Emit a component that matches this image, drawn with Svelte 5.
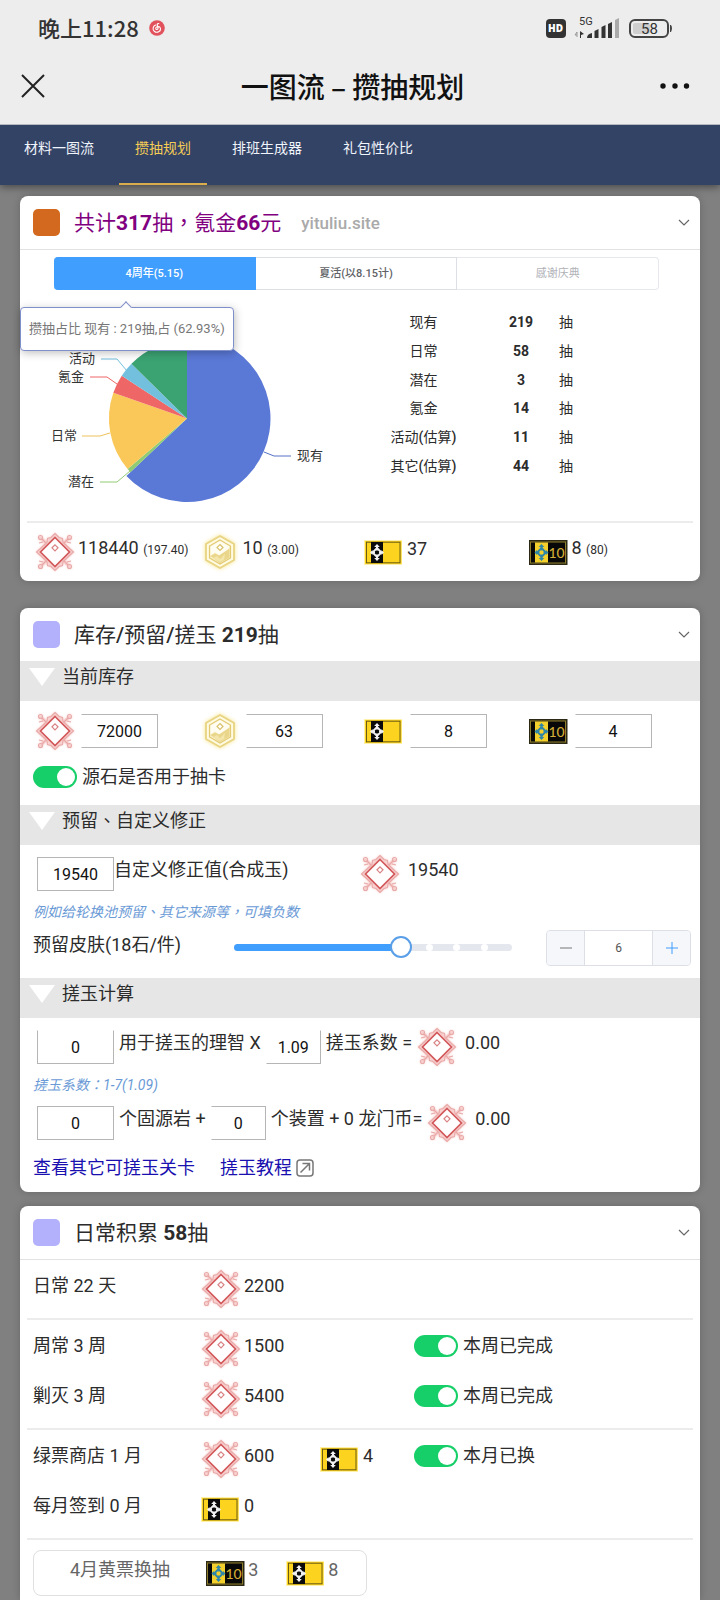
<script>
  const tabs = ['材料一图流', '攒抽规划', '排班生成器', '礼包性价比'];
  const stats = [
    ['现有', '', 219],
    ['日常', '', 58],
    ['潜在', '', 3],
    ['氪金', '', 14],
    ['活动', '估算', 11],
    ['其它', '估算', 44]
  ];

  const cx = 167;
  const cy = 128.5;
  const slices = [
    { value: 62.93, color: '#5a78d6', r: 83.5 },
    { value: 0.85, color: '#8fcb74', r: 78 },
    { value: 16.55, color: '#fac858', r: 78 },
    { value: 3.9, color: '#ee6666', r: 78 },
    { value: 3.15, color: '#73c0de', r: 78 },
    { value: 12.62, color: '#3ba272', r: 78 }
  ];
  let turned = 0;
  const wedges = slices.map((s) => {
    const a = (turned / 100) * 2 * Math.PI;
    turned += s.value;
    const b = (turned / 100) * 2 * Math.PI;
    const p = (t) => `${(cx + s.r * Math.sin(t)).toFixed(2)} ${(cy - s.r * Math.cos(t)).toFixed(2)}`;
    return { color: s.color, d: `M${cx} ${cy}L${p(a)}A${s.r} ${s.r} 0 ${b - a > Math.PI ? 1 : 0} 1 ${p(b)}Z` };
  });
  const callouts = [
    { name: '活动', x: 49, y: 73, color: '#73c0de', line: '81,69 97,69 107,81' },
    { name: '氪金', x: 38, y: 91, color: '#ee6666', line: '70,87 87,87 97,94' },
    { name: '日常', x: 31, y: 150, color: '#eec25c', line: '62,146 80,146 90,143' },
    { name: '潜在', x: 48, y: 196, color: '#91cc75', line: '80,192 97,192 110,181' },
    { name: '现有', x: 277, y: 170, color: '#5470c6', line: '244,162 254,166 271,166' }
  ];
  let skins = $state(6);
</script>

{#snippet jade()}
  <svg class="ico red" viewBox="0 0 40 40" aria-hidden="true">
    <g fill="#fbdedd" stroke="#f8d0cf" stroke-width="3" stroke-linejoin="round">
      <path d="M20 3 37 20 20 37 3 20Z" /><path d="M5 5l7 7M35 5l-7 7M5 35l7-7M35 35l-7-7" />
    </g>
    <g fill="none" stroke="#e8aaa8" stroke-width="1.1">
      <path d="M20 1.500l4 4 3.500 1 .5 4 7 6.500 3.500 3-3.500 3-7 6.500-.5 4-3.500 1-4 4-4-4-3.500-1-.5-4-7-6.500L1.500 20 5 17l7-6.500.5-4 3.500-1z" />
      <circle cx="5.500" cy="5.500" r="2" /><circle cx="34.500" cy="5.500" r="2" />
      <circle cx="5.500" cy="34.500" r="2" /><circle cx="34.500" cy="34.500" r="2" />
      <path d="M7 7l4 4M33 7l-4 4M7 33l4-4M33 33l-4-4M4 11l4-1M36 11l-4-1M4 29l4 1M36 29l-4 1" />
    </g>
    <path d="M20 5.500 34.500 20 20 34.500 5.500 20Z" fill="#fffdfd" stroke="#d2585b" stroke-width="1.700" />
    <path d="M20 12.800 23 15.800 20 18.800 17 15.800Z" fill="#fff" stroke="#d98183" stroke-width="1.200" />
  </svg>
{/snippet}

{#snippet prime()}
  <svg class="ico gold" viewBox="0 0 40 40" aria-hidden="true">
    <path d="M20 4 34 12V28L20 36 6 28V12Z" fill="#fffbe2" stroke="#e8d484" stroke-width="1.800" />
    <path d="M20 8 30.500 14V26L20 32 9.500 26V14Z" fill="#f8efc4" stroke="#e2ca74" stroke-width="1.200" />
    <path d="M10.500 14.500 20 9l9.500 5.500-3 7-6.500 2-5-3-4.500 3z" fill="#fffdf2" />
    <path d="M10.500 24l4.500-2.500 4 2 6-4 4.500-3v9l-9.500 5.500z" fill="#ead68a" />
    <path d="M13 26l4-2 3 3 5-5-1 6-4 2z" fill="#f4e5ab" />
    <path d="M20 12.500 23 15.500 20 18.500 17 15.500Z" fill="#fff" stroke="#d8c36c" stroke-width="1.200" />
  </svg>
{/snippet}

{#snippet emblem(color)}
  <g transform="translate(12 11.500)">
    <path d="M0-4.500 4.500 0 0 4.500-4.500 0Z" fill="none" stroke={color} stroke-width="1.800" />
    <path d="M0-8.500 2.800-5.500H1V-2H-1V-5.500H-2.800ZM0 8.500 2.800 5.500H1V2H-1V5.500H-2.800ZM-7 0-4.500-2.500V-1H-2V1H-4.500V2.500ZM7 0 4.500-2.500V-1H2V1H4.500V2.500Z" fill={color} />
  </g>
{/snippet}

{#snippet ticket()}
  <svg class="ico" viewBox="-1 -9 40 40" aria-hidden="true">
    <rect x="-1" y="-1" width="38" height="25" fill="#fff2a8" />
    <rect width="36.500" height="23" fill="#fcd31e" />
    <rect x="1.500" y="1.200" width="33.500" height="20.600" fill="none" stroke="#6d5c14" />
    <rect x="6" y="1" width="12" height="21" fill="#0b0b0b" />
    {@render emblem('#f2f2f2')}
  </svg>
{/snippet}

{#snippet ticketTen()}
  <svg class="ico" viewBox="0 -9 40 40" aria-hidden="true">
    <rect x="-.5" y="-1" width="39" height="25" fill="#2b2815" />
    <rect x="1.500" y="1" width="35" height="21" fill="#080808" stroke="#8d7c2a" />
    <rect x="6" y="1.500" width="13" height="20" fill="#f4d02c" />
    <g transform="translate(.5 0)">{@render emblem('#2e86a8')}</g>
    <text x="19.500" y="17" font-size="14" font-weight="500" fill="#d3ac35" font-family="Lato, sans-serif">10</text>
  </svg>
{/snippet}

{#snippet chevron()}
  <svg class="chev" viewBox="0 0 12 8" aria-hidden="true"><path d="M1 1l5 5 5-5" fill="none" stroke="#666" stroke-width="1.200" /></svg>
{/snippet}

<div class="phone">
  <div class="status">
    <span class="clock">晚上11:28</span>
    <svg class="music" viewBox="0 0 16 16" aria-hidden="true">
      <circle cx="8" cy="8" r="7.800" fill="#e2525c" />
      <path d="M9.800 3.600C8.400 3.200 8 4 8.200 5l.8 3.300c.2 1.600-2.300 1.700-2.300 0 0-1.900 4.200-2.700 4.800.2.500 3-3.400 4.800-6 3C3 9.700 4 6 6.600 5" fill="none" stroke="#fff" stroke-width="1.100" stroke-linecap="round" />
    </svg>
    <svg class="signals" viewBox="0 -1 128 26" aria-hidden="true">
      <rect x="0" y="3" width="20" height="19" rx="4" fill="#333" />
      <text x="2" y="16" font-size="10" font-weight="800" fill="#fff" font-family="Open Sans">HD</text>
      <text x="33" y="9" font-size="11" fill="#333" font-family="Roboto">5G</text>
      <path d="M31 21v-5l-2 3h2" stroke="#999" fill="none" /><path d="M34 22v-7l4 3-3 1v3z" fill="#333" />
      <path d="M41 22q0-4 5-5v5zM48.500 22v-7l4-2v9zM55.500 22V11l4-2v13zM62 22V8l4-2v16z" fill="#333" />
      <path d="M69 22V4l4-2v20z" fill="#aaa" />
      <rect x="84" y="4" width="38" height="17" rx="5" fill="none" stroke="#444" stroke-width="2" />
      <rect x="87" y="7" width="17" height="11" rx="2" fill="#cfcfcf" />
      <text x="95" y="18" font-size="15" fill="#333" font-family="Roboto">58</text>
      <path d="M124 9h1q2 3 0 7h-1z" fill="#444" />
    </svg>
  </div>
  <header class="titlebar">
    <button class="bare" aria-label="关闭"><svg width="24" height="24" viewBox="0 0 24 24"><path d="M1 1l22 22M23 1 1 23" stroke="#222" stroke-width="2" /></svg></button>
    <h1>一图流 – 攒抽规划</h1>
    <button class="bare" aria-label="更多"><svg width="30" height="24" viewBox="0 0 30 24" fill="#111"><circle cx="3" cy="12" r="2.700" /><circle cx="15" cy="12" r="2.700" /><circle cx="26.500" cy="12" r="2.700" /></svg></button>
  </header>
  <nav>
    {#each tabs as tab, i}
      <a href="#{i}" class:active={i === 1}>{tab}</a>
    {/each}
  </nav>

  <main>
    <section class="card first">
      <div class="head line">
        <i class="mark orange"></i>
        <h2 class="purple">共计<b>317</b>抽，氪金<b>66</b>元</h2>
        <span class="site">yituliu.site</span>
        {@render chevron()}
      </div>
      <div class="seg">
        <button class="on">4周年(5.15)</button>
        <button>夏活(以8.15计)</button>
        <button class="off">感谢庆典</button>
      </div>
      <div class="overview">
        <div class="chart">
          <svg width="333" height="231" viewBox="0 0 333 231" role="img">
            {#each wedges as w}<path d={w.d} fill={w.color} />{/each}
            {#each callouts as c}
              <polyline points={c.line} fill="none" stroke={c.color} />
              <text x={c.x} y={c.y} font-size="13" fill="#333">{c.name}</text>
            {/each}
          </svg>
          <div class="tip">攒抽占比 现有 : 219抽,占 (62.93%)</div>
        </div>
        <table>
          <tbody>
            {#each stats as [name, note, n]}
              <tr><td class="name">{name}{#if note}<b>(</b>{note}<b>)</b>{/if}</td><td class="num">{n}</td><td class="unit">抽</td></tr>
            {/each}
          </tbody>
        </table>
      </div>
      <hr />
      <div class="quads">
        <div>{@render jade()}<span class="t">118440 <small>(197.40)</small></span></div>
        <div>{@render prime()}<span class="t">10 <small>(3.00)</small></span></div>
        <div>{@render ticket()}<span class="t">37</span></div>
        <div>{@render ticketTen()}<span class="t">8 <small>(80)</small></span></div>
      </div>
    </section>

    <section class="card">
      <div class="head">
        <i class="mark"></i>
        <h2>库存<em>/</em>预留<em>/</em>搓玉 <b>219</b>抽</h2>
        {@render chevron()}
      </div>
      <h3>当前库存</h3>
      <div class="quads stock">
        <div>{@render jade()}<input class="box open" aria-label="合成玉" value="72000" /></div>
        <div>{@render prime()}<input class="box open" aria-label="源石" value="63" /></div>
        <div>{@render ticket()}<input class="box open" aria-label="单抽券" value="8" /></div>
        <div>{@render ticketTen()}<input class="box open" aria-label="十连券" value="4" /></div>
      </div>
      <label class="check solo"><input type="checkbox" checked /><span>源石是否用于抽卡</span></label>
      <h3 class="gap">预留、自定义修正</h3>
      <div class="fields">
        <div class="half"><input class="box" id="fix" value="19540" /><label class="t" for="fix">自定义修正值(合成玉)</label></div>
        {@render jade()}<span class="t">19540</span>
      </div>
      <p class="hint">例如给轮换池预留、其它来源等，可填负数</p>
      <div class="skins">
        <label class="t" for="skin">预留皮肤(18石/件)</label>
        <div class="slider">
          <div class="rail">
            <div class="done" style="width:{skins * 10}%"></div>
            {#each [7, 8, 9] as s}<i style="left:{s * 10}%"></i>{/each}
          </div>
          <input id="skin" type="range" min="0" max="10" bind:value={skins} />
        </div>
        <div class="stepper">
          <button aria-label="减少" onclick={() => (skins = Math.max(0, skins - 1))}><svg width="12" height="12" viewBox="0 0 12 12"><path d="M0 6h12" stroke="#777" /></svg></button>
          <input aria-label="预留皮肤数量" bind:value={skins} />
          <button aria-label="增加" onclick={() => (skins = Math.min(10, skins + 1))}><svg width="12" height="12" viewBox="0 0 12 12"><path d="M0 6h12M6 0v12" stroke="#409eff" /></svg></button>
        </div>
      </div>
      <h3>搓玉计算</h3>
      <div class="fields">
        <input class="box flat" id="ap" value="0" /><label class="t" for="ap">用于搓玉的理智 X</label>
        <input class="box small flat open" id="rate" value="1.09" /><label class="t" for="rate">搓玉系数 =</label>
        {@render jade()}<span class="t">0.00</span>
      </div>
      <p class="hint">搓玉系数：1-7(1.09)</p>
      <div class="fields">
        <input class="box" id="rock" value="0" /><label class="t" for="rock">个固源岩 +</label>
        <input class="box small open" id="device" value="0" /><label class="t" for="device">个装置 + 0 龙门币=</label>
        {@render jade()}<span class="t">0.00</span>
      </div>
      <div class="links">
        <a href="#stages">查看其它可搓玉关卡</a>
        <a href="#guide">搓玉教程<svg width="18" height="18" viewBox="0 0 18 18"><rect x="1" y="1" width="16" height="16" rx="3" fill="none" stroke="#777" stroke-width="1.500" /><path d="M4.500 13.500 13 5M6.500 4.500H13.500V11.500" fill="none" stroke="#777" stroke-width="1.500" /></svg></a>
      </div>
    </section>

    <section class="card last">
      <div class="head line">
        <i class="mark"></i>
        <h2>日常积累 <b>58</b>抽</h2>
        {@render chevron()}
      </div>
      <div class="group">
        <div class="daily"><span class="t">日常 22 天</span><div>{@render jade()}<span class="t">2200</span></div></div>
      </div>
      <hr />
      <div class="group">
        <div class="daily"><span class="t">周常 3 周</span><div>{@render jade()}<span class="t">1500</span></div><div></div><label class="check t"><input type="checkbox" checked /><span>本周已完成</span></label></div>
        <div class="daily"><span class="t">剿灭 3 周</span><div>{@render jade()}<span class="t">5400</span></div><div></div><label class="check t"><input type="checkbox" checked /><span>本周已完成</span></label></div>
      </div>
      <hr />
      <div class="group">
        <div class="daily"><span class="t">绿票商店 1 月</span><div>{@render jade()}<span class="t">600</span></div><div>{@render ticket()}<span class="t">4</span></div><label class="check t"><input type="checkbox" checked /><span>本月已换</span></label></div>
        <div class="daily"><span class="t">每月签到 0 月</span><div>{@render ticket()}<span class="t">0</span></div></div>
      </div>
      <hr />
      <button class="exchange">
        <span class="t label">4月黄票换抽</span>
        <span class="pair">{@render ticketTen()}<span class="t">3</span></span>
        <span class="pair">{@render ticket()}<span class="t">8</span></span>
      </button>
    </section>
  </main>
</div>

<style>
  :global(body) { margin: 0; background: #808080; }
  * { box-sizing: border-box; }
  .phone { font-family: Roboto, "Noto Sans CJK TC", "Noto Sans CJK SC", sans-serif; font-size: 18px; line-height: 24px; color: #2c2c2c; overflow: hidden; }
  button, input { font: inherit; color: inherit; margin: 0; padding: 0; }
  svg { display: block; flex: none; }

  .status { display: flex; align-items: center; height: 56px; padding: 0 46px 0 38px; background: #ededed; color: #333; }
  .clock { padding-bottom: 2px; font-family: "Noto Sans CJK SC", sans-serif; font-size: 22px; font-weight: 500; }
  .music { width: 16px; height: 16px; margin-left: 10px; }
  .signals { width: 128px; height: 26px; margin-left: auto; }
  .titlebar { display: flex; align-items: center; justify-content: space-between; height: 69px; padding: 0 30px 9px 21px; background: #ededed; border-bottom: 1px solid #b4b8c0; color: #111; }
  .bare { border: 0; background: none; }
  h1 { margin: 0; font: 500 28px/36px "Noto Sans CJK SC", sans-serif; }
  nav { position: relative; display: flex; gap: 9px; height: 60px; padding: 0 8px; background: #334366; box-shadow: 0 2px 8px rgba(0, 0, 0, .45); clip-path: inset(0 0 -12px 0); font-family: "Noto Sans CJK SC", sans-serif; font-size: 14px; }
  nav a { padding: 10px 16px 0; color: #f0f4fb; text-decoration: none; border-bottom: 2px solid transparent; }
  nav .active { color: #f5cd55; border-color: #d9ad4c; }

  main { display: flex; flex-direction: column; gap: 14px; padding: 11px 20px 0; }
  .card { background: #fff; border-radius: 8px; box-shadow: 0 0 8px rgba(0, 0, 0, .2); }
  .first { margin-bottom: 13px; }
  .last { padding-bottom: 4px; border-radius: 8px 8px 0 0; }
  .head { display: flex; align-items: center; height: 53px; padding: 0 10px 0 13px; }
  .line { height: 54px; border-bottom: 1px solid #e2e2e2; }
  .mark { width: 27px; height: 27px; margin-right: 14px; border-radius: 5px; background: #b3b1fb; }
  .orange { background: #d2691e; }
  h2 { margin: 0; font-size: 21px; font-weight: 400; line-height: 28px; }
  h2 em { font-style: normal; font-weight: 500; }
  .purple { color: #800080; }
  .site { margin-left: 20px; font-size: 17px; font-weight: 500; color: #aaa; }
  .chev { width: 12px; height: 8px; margin-left: auto; }

  .seg { display: flex; margin: 7px 41px 0 34px; }
  .seg button { flex: 1; height: 33px; border: 1px solid #dcdfe6; border-left-width: 0; background: #fff; font-size: 11px; font-weight: 500; color: #606266; }
  .seg .on { background: #409eff; border-color: #409eff; color: #fff; border-radius: 4px 0 0 4px; }
  .seg .off { color: #b0b2b8; font-weight: 400; border-radius: 0 4px 4px 0; border-color: #e6e8ee; }
  .overview { display: flex; }
  .chart { position: relative; width: 333px; }
  .tip { position: absolute; left: 0; top: 17px; padding: 9px 8px; border: 1px solid #7f8fc9; border-radius: 4px; background: #fff; box-shadow: 1px 2px 8px rgba(0, 0, 0, .25); font-size: 13px; color: #777; white-space: nowrap; }
  .tip::before { content: ""; position: absolute; left: 101px; top: -5px; width: 7px; height: 7px; background: #fff; border: solid #7f8fc9; border-width: 1px 0 0 1px; transform: rotate(45deg); }
  table { height: 172px; margin-top: 18px; border-collapse: collapse; font-size: 14px; line-height: 20px; text-align: center; }
  td { padding: 0; }
  td b { font-weight: 500; }
  .name { width: 141px; }
  .num { width: 54px; font-weight: 700; }
  .unit { width: 36px; }
  hr { height: 2px; margin: 0 7px; border: 0; background: #ececec; }

  .ico { width: 40px; height: 40px; }
  .gold { filter: drop-shadow(0 0 2px #f6e588); }
  .red { filter: drop-shadow(0 0 1px #f9cfce); }
  .t { padding-bottom: 6px; white-space: nowrap; }
  small { font-size: 12px; }
  .quads { display: grid; grid-template-columns: repeat(4, 1fr); align-items: center; height: 58px; padding: 0 7px 0 15px; }
  .quads > div { display: flex; align-items: center; gap: 3px; }
  .stock { height: 60px; }
  .stock > div { gap: 6px; }
  .box { width: 77px; height: 34px; border: 1px solid #b5b5b5; border-radius: 0; background: #fff; font-size: 16px; text-align: center; color: #111; outline: 0; }
  .small { width: 55px; }
  .open { border-left-color: transparent; }
  .flat { border-top-color: transparent; }
  h3 { display: flex; gap: 7px; height: 40px; margin: 0; padding: 3px 9px; background: #e6e6e6; font-size: 18px; font-weight: 400; line-height: 26px; }
  h3::before { content: ""; width: 26px; height: 18px; margin-top: 4px; background: #fff; clip-path: polygon(0 0, 100% 0, 50% 100%); }
  .gap { margin-top: 10px; }
  .check { display: flex; align-items: center; gap: 5px; }
  .check input { appearance: none; display: flex; align-items: center; justify-content: flex-end; width: 44px; height: 22px; padding-right: 2px; border-radius: 11px; background: #17cf68; }
  .check input::after { content: ""; width: 18px; height: 18px; border-radius: 50%; background: #fff; }
  .solo { height: 34px; margin-left: 13px; padding-bottom: 2px; }
  .fields { display: flex; align-items: center; gap: 5px; height: 58px; padding: 0 17px; }
  .half { display: flex; align-items: center; flex: 0 0 318px; }
  .fields .t { padding-bottom: 8px; }
  .fields .ico + .t { padding-left: 3px; }
  .hint { margin: 0 13px; font-size: 14px; line-height: 18px; font-style: italic; color: #6a9ad6; }
  .skins { display: flex; align-items: center; height: 57px; padding: 0 9px 4px 13px; }
  .skins > label { width: 201px; }
  .slider { position: relative; flex: 1; margin-right: 34px; }
  .rail { position: relative; height: 7px; border-radius: 4px; background: #e4e7ed; }
  .rail i { position: absolute; top: 0; width: 7px; height: 7px; margin-left: -3px; border-radius: 50%; background: #fff; }
  .done { height: 7px; border-radius: 4px; background: #409eff; }
  .slider input { position: absolute; left: -11px; top: -8px; width: calc(100% + 22px); height: 22px; appearance: none; background: none; }
  .slider input::-webkit-slider-thumb { appearance: none; width: 22px; height: 22px; border: 2px solid #5a9fe8; border-radius: 50%; background: #fff; }
  .stepper { display: flex; width: 145px; height: 36px; border: 1px solid #dcdfe6; border-radius: 4px; overflow: hidden; }
  .stepper button { display: flex; align-items: center; justify-content: center; width: 37px; border: 0; background: #f5f7fa; }
  .stepper input { flex: 1; min-width: 0; border: solid #dcdfe6; border-width: 0 1px; text-align: center; font-size: 12px; color: #555; }
  .links { display: flex; gap: 25px; height: 40px; padding: 4px 13px; }
  .links a { display: flex; gap: 4px; color: #1a10b0; text-decoration: none; }
  .links svg { margin-top: 3px; }

  .group { padding: 4px 8px 4px 13px; }
  .daily { display: grid; grid-template-columns: 168px 119px 94px 1fr; align-items: center; height: 50px; }
  .daily > div { display: flex; align-items: center; gap: 3px; }
  .exchange { display: flex; align-items: center; gap: 28px; height: 46px; margin: 10px 14px 0 13px; padding: 0 28px 0 36px; border: 1px solid #e0e0e0; border-radius: 8px; background: #fff; color: #666; }
  .label { padding-right: 8px; }
  .pair { display: flex; align-items: center; gap: 2px; }
</style>
